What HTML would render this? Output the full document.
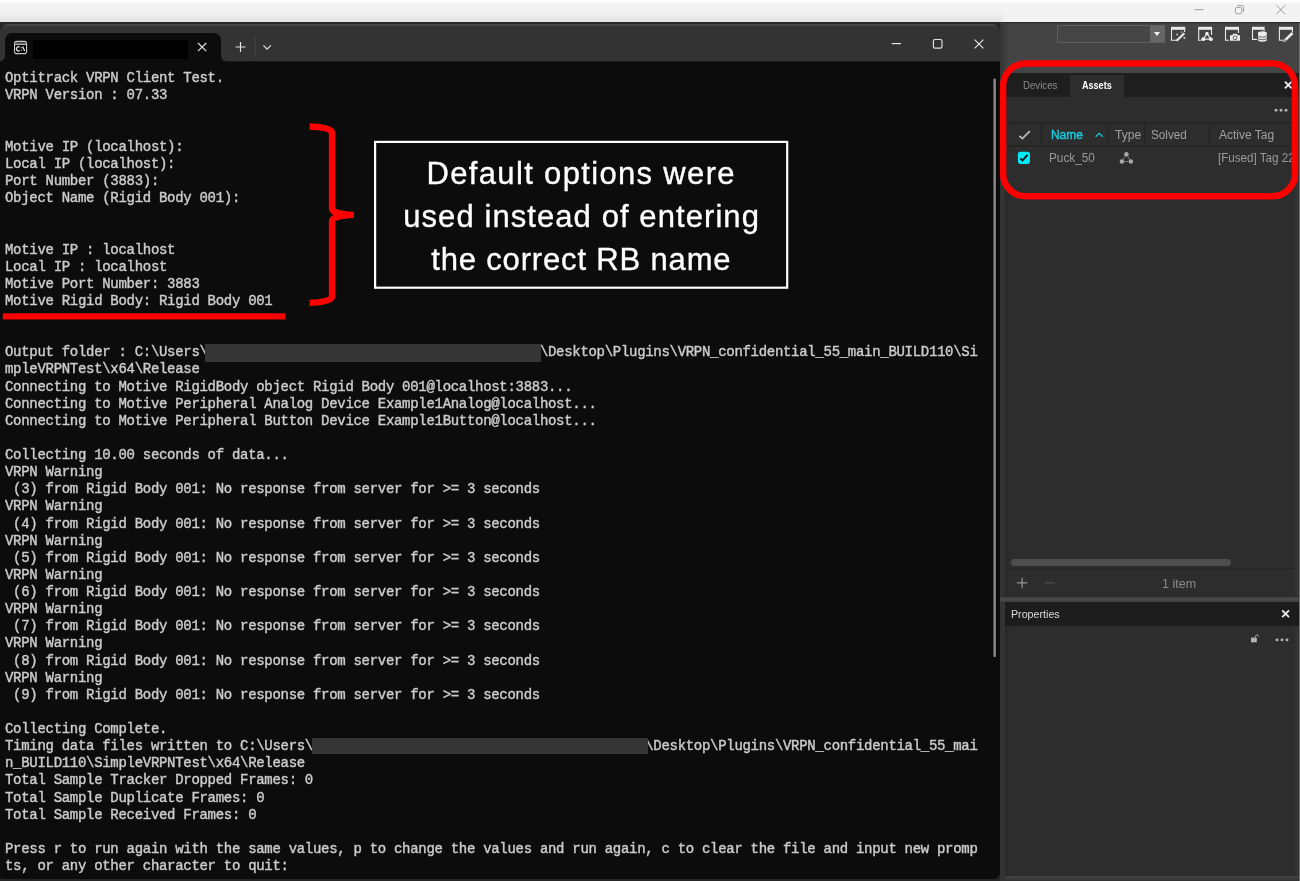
<!DOCTYPE html>
<html>
<head>
<meta charset="utf-8">
<title>VRPN</title>
<style>
html,body{margin:0;padding:0;}
body{width:1300px;height:881px;overflow:hidden;position:relative;background:#333333;font-family:"Liberation Sans",sans-serif;}
.abs{position:absolute;}
.g{will-change:transform;}
/* top light bar */
#topbar{left:0;top:0;width:1300px;height:21.8px;background:linear-gradient(#ffffff 0,#ffffff 1.6px,#f3f3f3 2.8px,#f3f3f3 21.8px);}
#topsh{left:0;top:11px;width:1004px;height:10.8px;background:linear-gradient(rgba(0,0,0,0) 0,rgba(0,0,0,0.025) 40%,rgba(0,0,0,0.07) 100%);border-radius:0 0 6px 0;}
/* terminal window */
#term{left:0;top:23.7px;width:1000px;height:855.5px;background:#0c0c0c;border-radius:8px 8px 6px 3px;overflow:hidden;}
#ttitle{left:0;top:0;width:1000px;height:37.7px;background:linear-gradient(#464646 0,#464646 1.4px,#333333 2.4px);}
#tab{left:5px;top:9.5px;width:216px;height:28.4px;background:#0c0c0c;border-radius:7px 7px 0 0;}
#redact0{left:33px;top:40px;width:155px;height:19px;background:#000;}
.tl{position:absolute;left:5px;white-space:pre;font-family:"Liberation Mono",monospace;font-size:14px;letter-spacing:-0.297px;color:#cccccc;line-height:17px;height:17px;-webkit-text-stroke:0.4px #cccccc;}
.rd{position:absolute;background:#353535;}

/* right panel */
#rp{left:1000px;top:22px;width:300px;height:859px;background:#333333;}
#rptool{left:1000px;top:23px;width:300px;height:50px;background:linear-gradient(#3b3b3b 0,#3b3b3b 1px,#444444 1px);}
#rpline{left:0;top:21.8px;width:1300px;height:2px;background:#2c2c2c;}
#dd{left:1057px;top:25px;width:106px;height:16px;border:1px solid #5e5e5e;background:#454545;}
#ddb{left:1149.5px;top:26px;width:15px;height:16px;background:#666666;}
#ddarrow{left:1153.5px;top:32px;width:0;height:0;border-left:3.5px solid transparent;border-right:3.5px solid transparent;border-top:4px solid #f4f4f4;}
#pA{left:1005.2px;top:73px;width:290.3px;height:523px;background:linear-gradient(to right,#272727,#2d2d2d 4px);}
#pAtabs{left:1005px;top:72.8px;width:293.5px;height:24.4px;background:#1e1e1e;}
#pAtab{left:1070px;top:74.8px;width:54.4px;height:22.5px;background:#2d2d2d;}
.t{position:absolute;white-space:pre;line-height:1;transform-origin:0 0;}
.hline{position:absolute;height:1.4px;background:#242424;}
.vline{position:absolute;width:1.3px;background:#242424;}
#hsb{left:1011px;top:559px;width:220px;height:7px;border-radius:3.5px;background:#4e4e4e;}
#pB{left:1005.2px;top:601.8px;width:290.3px;height:274px;background:linear-gradient(to right,#272727,#2d2d2d 4px);}
#pBtitle{left:1005px;top:601.8px;width:293.5px;height:24.2px;background:#1c1c1c;}
#botband{left:0;top:22px;width:1000px;height:859px;background:#262626;}
#botband2{left:1005px;top:875.5px;width:295px;height:5.5px;background:linear-gradient(#444,#333);}
.nt{position:absolute;white-space:pre;font-size:31px;line-height:36px;color:#ffffff;-webkit-text-stroke:0.35px #ffffff;}
</style>
</head>
<body>
<div id="topbar" class="abs"></div><div id="topsh" class="abs"></div>
<div id="rp" class="abs"></div>
<div id="rpline" class="abs"></div>
<div id="rptool" class="abs"></div>
<div class="abs" style="left:1000px;top:24px;width:9px;height:49px;background:linear-gradient(to right,rgba(0,0,0,0.25),rgba(0,0,0,0))"></div>
<div id="dd" class="abs"></div><div id="ddb" class="abs"></div><div id="ddarrow" class="abs"></div>
<div id="pA" class="abs"></div>
<div id="pAtabs" class="abs"></div>
<div id="pAtab" class="abs"></div>
<div id="hsb" class="abs"></div>
<div class="hline" style="left:1005px;top:568px;width:291px;background:#262626"></div>
<div id="pB" class="abs"></div>
<div id="pBtitle" class="abs"></div>
<div class="hline" style="left:1005px;top:650.5px;width:291px;background:#333"></div>
<div id="botband" class="abs"></div>
<div id="botband2" class="abs"></div>
<div class="abs" style="left:1000px;top:595.6px;width:300px;height:1.6px;background:#2a2a2a"></div>
<div class="abs" style="left:1000px;top:597.2px;width:300px;height:4.6px;background:linear-gradient(#404040,#4a4a4a 50%,#3c3c3c)"></div>
<div id="pBtitle2" class="abs" style="left:1005px;top:601.8px;width:293.6px;height:24.2px;background:#1c1c1c"></div>
<div class="abs" style="left:1298.6px;top:23px;width:1.4px;height:858px;background:#727272"></div>
<div id="ptext" class="g">
<div class="t" style="left:1023.32px;top:80.03px;font-size:10.8px;color:#8c8c8c;transform:scaleX(0.8946)">Devices</div>
<div class="t" style="left:1082.16px;top:80.03px;font-size:10.8px;color:#ffffff;font-weight:bold;transform:scaleX(0.8381)">Assets</div>
<div class="t" style="left:1050.78px;top:129.23px;font-size:12px;color:#14cde0;-webkit-text-stroke:0.4px #14cde0;transform:scaleX(0.9943)">Name</div>
<div class="t" style="left:1114.88px;top:129.23px;font-size:12px;color:#a0a0a0;transform:scaleX(1.0030)">Type</div>
<div class="t" style="left:1150.60px;top:129.23px;font-size:12px;color:#a0a0a0;transform:scaleX(0.9784)">Solved</div>
<div class="t" style="left:1219.03px;top:129.23px;font-size:12px;color:#a0a0a0;transform:scaleX(1.0006)">Active Tag</div>
<div class="t" style="left:1049.29px;top:150.95px;font-size:13px;color:#9a9a9a;transform:scaleX(0.9055)">Puck_50</div>
<div class="t" style="left:1217.50px;top:150.95px;font-size:13px;color:#9a9a9a;transform:scaleX(0.8942)">[Fused] Tag 22</div>
<div class="t" style="left:1161.75px;top:576.50px;font-size:13px;color:#8a8a8a;transform:scaleX(0.9632)">1 item</div>
<div class="t" style="left:1010.56px;top:609.16px;font-size:11px;color:#dddddd;transform:scaleX(0.9709)">Properties</div>
</div><!--endptext-->
<div id="term" class="abs">
  <div id="ttitle" class="abs"></div>
  <div id="tab" class="abs"></div>
</div>
<div id="redact0" class="abs"></div>
<div id="lines" class="g">
<div class="tl" style="top:70.36px">Optitrack VRPN Client Test.</div>
<div class="tl" style="top:87.48px">VRPN Version : 07.33</div>
<div class="tl" style="top:138.86px">Motive IP (localhost):</div>
<div class="tl" style="top:155.98px">Local IP (localhost):</div>
<div class="tl" style="top:173.11px">Port Number (3883):</div>
<div class="tl" style="top:190.23px">Object Name (Rigid Body 001):</div>
<div class="tl" style="top:241.61px">Motive IP : localhost</div>
<div class="tl" style="top:258.74px">Local IP : localhost</div>
<div class="tl" style="top:275.86px">Motive Port Number: 3883</div>
<div class="tl" style="top:292.99px">Motive Rigid Body: Rigid Body 001</div>
<div class="tl" style="top:344.36px">Output folder : C:\Users\                                         \Desktop\Plugins\VRPN_confidential_55_main_BUILD110\Si</div>
<div class="tl" style="top:361.49px">mpleVRPNTest\x64\Release</div>
<div class="tl" style="top:378.61px">Connecting to Motive RigidBody object Rigid Body 001@localhost:3883...</div>
<div class="tl" style="top:395.74px">Connecting to Motive Peripheral Analog Device Example1Analog@localhost...</div>
<div class="tl" style="top:412.86px">Connecting to Motive Peripheral Button Device Example1Button@localhost...</div>
<div class="tl" style="top:447.11px">Collecting 10.00 seconds of data...</div>
<div class="tl" style="top:464.24px">VRPN Warning</div>
<div class="tl" style="top:481.36px"> (3) from Rigid Body 001: No response from server for &gt;= 3 seconds</div>
<div class="tl" style="top:498.49px">VRPN Warning</div>
<div class="tl" style="top:515.61px"> (4) from Rigid Body 001: No response from server for &gt;= 3 seconds</div>
<div class="tl" style="top:532.74px">VRPN Warning</div>
<div class="tl" style="top:549.86px"> (5) from Rigid Body 001: No response from server for &gt;= 3 seconds</div>
<div class="tl" style="top:566.99px">VRPN Warning</div>
<div class="tl" style="top:584.11px"> (6) from Rigid Body 001: No response from server for &gt;= 3 seconds</div>
<div class="tl" style="top:601.24px">VRPN Warning</div>
<div class="tl" style="top:618.36px"> (7) from Rigid Body 001: No response from server for &gt;= 3 seconds</div>
<div class="tl" style="top:635.49px">VRPN Warning</div>
<div class="tl" style="top:652.61px"> (8) from Rigid Body 001: No response from server for &gt;= 3 seconds</div>
<div class="tl" style="top:669.74px">VRPN Warning</div>
<div class="tl" style="top:686.86px"> (9) from Rigid Body 001: No response from server for &gt;= 3 seconds</div>
<div class="tl" style="top:721.11px">Collecting Complete.</div>
<div class="tl" style="top:738.24px">Timing data files written to C:\Users\                                         \Desktop\Plugins\VRPN_confidential_55_mai</div>
<div class="tl" style="top:755.36px">n_BUILD110\SimpleVRPNTest\x64\Release</div>
<div class="tl" style="top:772.49px">Total Sample Tracker Dropped Frames: 0</div>
<div class="tl" style="top:789.61px">Total Sample Duplicate Frames: 0</div>
<div class="tl" style="top:806.74px">Total Sample Received Frames: 0</div>
<div class="tl" style="top:840.99px">Press r to run again with the same values, p to change the values and run again, c to clear the file and input new promp</div>
<div class="tl" style="top:858.11px">ts, or any other character to quit:</div>
</div><!--endlines-->
<div class="rd" style="left:205px;top:343.6px;width:335.8px;height:18px"></div>
<div class="rd" style="left:311.5px;top:738.2px;width:336.5px;height:16px"></div>
<svg id="icons" class="abs" style="left:0;top:0" width="1300" height="881" viewBox="0 0 1300 881">
<rect x="993.45" y="78.6" width="2.4" height="578.5" rx="1.2" fill="#8c8c8c"/>
<rect x="227" y="61" width="773" height="1" fill="#1b1b1b"/><rect x="0" y="61" width="1" height="1" fill="#1b1b1b"/>
<!-- top light bar window controls -->
<g stroke="#9b9b9b" stroke-width="1" fill="none">
<path d="M1194.5,9.7 H1203.5"/>
<rect x="1235.4" y="7.4" width="6.4" height="6.4" rx="1.5"/>
<path d="M1237.4,5.4 H1241.6 Q1243.6,5.4 1243.6,7.4 V11.6"/>
<path d="M1276.3,5.2 L1285.3,14.2 M1285.3,5.2 L1276.3,14.2"/>
</g>
<path d="M221,61.5 V55 Q221,61.5 227.5,61.5 Z M5,61.5 V55 Q5,61.5 -1.5,61.5 Z" fill="#0c0c0c"/>
<!-- terminal tab icon -->
<rect x="14.6" y="41.3" width="11.9" height="12.4" rx="2.2" fill="none" stroke="#c4c4c4" stroke-width="1.25"/>
<rect x="15.8" y="42.3" width="9.5" height="1.6" fill="#676767"/>
<path d="M14.6,44.6 H26.5" stroke="#c4c4c4" stroke-width="1"/>
<rect x="15.3" y="45.2" width="10.5" height="7.2" fill="#000"/>
<path d="M19.7,47.2 A2,2.1 0 1 0 19.7,50.4" fill="none" stroke="#e6e6e6" stroke-width="1.35"/>
<rect x="20.7" y="47.2" width="1.1" height="1.1" fill="#e0e0e0"/><rect x="20.7" y="49.6" width="1.1" height="1.1" fill="#e0e0e0"/>
<path d="M22.6,46.5 L24.7,51" stroke="#e6e6e6" stroke-width="1.3"/>
<!-- tab close, plus, divider, chevron -->
<g stroke="#e4e4e4" stroke-width="1.15" fill="none">
<path d="M198,43 L206.2,51.2 M206.2,43 L198,51.2"/>
<path d="M235.6,47 H245.4 M240.5,42.1 V51.9"/>
<path d="M263.4,45.3 L267.1,49.2 L270.8,45.3"/>
</g>
<path d="M255.1,37 V57.5" stroke="#474747" stroke-width="1"/>
<!-- terminal window controls -->
<g stroke="#e4e4e4" stroke-width="1.15" fill="none">
<path d="M891.7,43.6 H901"/>
<rect x="933.4" y="39.5" width="8.6" height="8.6" rx="1.6"/>
<path d="M974.6,39.6 L983.4,48.4 M983.4,39.6 L974.6,48.4"/>
</g>
<!-- right toolbar icons -->
<g id="tbi">
<g fill="none" stroke="#e9e9e9" stroke-width="1.1">
<path d="M1171.5,29 V40.3 H1177"/><path d="M1184.6,29 V32"/>
<path d="M1198.7,29 V40.3 H1201"/><path d="M1211.5,29 V35"/>
<path d="M1225.5,29 V40.3 H1229"/><path d="M1238.4,29 V33"/>
<path d="M1252.5,29 V39.4 H1257"/><path d="M1264,29 V31"/>
<path d="M1279.4,29 V40.3 H1284"/><path d="M1292.4,29 V32"/>
</g>
<g fill="#e9e9e9">
<rect x="1171" y="26.8" width="14.2" height="3"/>
<rect x="1198.2" y="26.8" width="13.9" height="3"/>
<rect x="1225" y="26.8" width="14" height="3"/>
<rect x="1252" y="26.8" width="12.6" height="3"/>
<rect x="1278.9" y="26.8" width="14.1" height="3"/>
</g>
<!-- wand -->
<path d="M1176.6,40.8 L1184.3,33.2" stroke="#e9e9e9" stroke-width="2.2"/>
<rect x="1176.3" y="33.7" width="1.6" height="1.6" fill="#d8d8d8"/><rect x="1183.6" y="37" width="1.7" height="1.7" fill="#d8d8d8"/><rect x="1181" y="31.5" width="1.2" height="1.2" fill="#cfcfcf"/>
<!-- nodes -->
<path d="M1207,33.6 L1203.2,39.2 H1210.9 Z" fill="none" stroke="#e9e9e9" stroke-width="1.2"/>
<circle cx="1207" cy="33.5" r="1.7" fill="#f2f2f2"/><circle cx="1203.2" cy="39.2" r="1.9" fill="#f2f2f2"/><circle cx="1210.9" cy="39.2" r="1.9" fill="#f2f2f2"/>
<!-- camera -->
<path d="M1230,35.2 H1232.3 L1233.2,33.8 H1236.8 L1237.7,35.2 H1240 V40.8 H1230 Z" fill="#ececec"/>
<circle cx="1235" cy="37.8" r="1.9" fill="none" stroke="#555" stroke-width="0.9"/>
<!-- database -->
<path d="M1258,33 V40 A4.4,1.7 0 0 0 1266.8,40 V33 Z" fill="#ececec"/>
<ellipse cx="1262.4" cy="33" rx="4.4" ry="1.7" fill="#ececec"/>
<path d="M1258,35.5 A4.4,1.7 0 0 0 1266.8,35.5 M1258,38 A4.4,1.7 0 0 0 1266.8,38" fill="none" stroke="#444" stroke-width="0.8"/>
<!-- pencil -->
<path d="M1284.6,40.6 L1292.6,33" stroke="#ececec" stroke-width="2.6"/>
<path d="M1283.3,41.9 L1285.6,39.6" stroke="#9a9a9a" stroke-width="2.2"/>
</g>
<!-- panel A: close, dots -->
<path d="M1284.9,81.6 L1291.7,88.4 M1291.7,81.6 L1284.9,88.4" stroke="#ececec" stroke-width="1.8" fill="none"/>
<g fill="#b4b4b4"><circle cx="1276" cy="110.3" r="1.45"/><circle cx="1281" cy="110.3" r="1.45"/><circle cx="1286" cy="110.3" r="1.45"/></g>
<g fill="#242424">
<rect x="1007.6" y="122.4" width="288" height="1.5"/><rect x="1007.6" y="145.1" width="288" height="1.6"/>
<rect x="1040.4" y="125" width="1.3" height="18.4"/><rect x="1107.9" y="125" width="1.3" height="18.4"/><rect x="1144.1" y="125" width="1.3" height="18.4"/><rect x="1208.9" y="125" width="1.3" height="18.4"/>
</g>
<!-- header checkmark, caret -->
<path d="M1019.3,135.9 L1022.4,138.6 L1029.8,131.2" stroke="#b8b8b8" stroke-width="1.8" fill="none"/>
<path d="M1095.6,136.8 L1099.2,133.4 L1102.8,136.8" stroke="#14cde0" stroke-width="1.3" fill="none"/>
<!-- checkbox -->
<rect x="1017.9" y="151.8" width="12.1" height="12.2" rx="2.4" fill="#05e9fb"/>
<path d="M1020.3,158.4 L1022.5,160.5 L1027.5,154.9" stroke="#161616" stroke-width="1.9" fill="none"/>
<!-- type icon -->
<path d="M1126.4,154.2 L1121.9,161.5 H1130.9 Z" fill="none" stroke="#777777" stroke-width="1"/>
<circle cx="1126.4" cy="154.2" r="2.25" fill="#a8a8a8"/><circle cx="1121.9" cy="161.5" r="2.25" fill="#a8a8a8"/><circle cx="1130.9" cy="161.5" r="2.25" fill="#a8a8a8"/>
<!-- footer plus/minus -->
<path d="M1016.9,582.9 H1027.3 M1022.1,577.7 V588.1" stroke="#adadad" stroke-width="1" fill="none"/>
<path d="M1045,582.9 H1055" stroke="#565656" stroke-width="1" fill="none"/>
<!-- properties: close, lock, dots -->
<path d="M1282.2,610.4 L1289,617.2 M1289,610.4 L1282.2,617.2" stroke="#ececec" stroke-width="1.8" fill="none"/>
<rect x="1251" y="637.6" width="5.8" height="4.7" fill="#b4b4b4"/>
<path d="M1255.4,637.6 V636.2 A1.7,2.2 0 0 1 1258.6,636.6" stroke="#b4b4b4" stroke-width="0.9" fill="none"/>
<g fill="#b4b4b4"><circle cx="1277" cy="639.9" r="1.45"/><circle cx="1282" cy="639.9" r="1.45"/><circle cx="1287" cy="639.9" r="1.45"/></g>
</svg>
<svg id="anno" class="abs" style="left:0;top:0" width="1300" height="881" viewBox="0 0 1300 881">
<rect x="1003.1" y="63.4" width="291.9" height="132.8" rx="22.5" ry="22.5" fill="none" stroke="#ff0000" stroke-width="6.5"/>
<rect x="2.8" y="313.3" width="282.6" height="6.2" fill="#ff0000"/>
<path d="M309.6,126.5 A22.4,6 0 0 1 332,132.5 L332,208.9 A22,6 0 0 0 354,214.9 A22,6 0 0 0 332,220.9 L332,296.8 A22.4,6 0 0 1 309.6,302.8" fill="none" stroke="#ff0000" stroke-width="6.3"/>
<rect x="375.1" y="141.9" width="412.1" height="145.8" fill="#0c0c0c" stroke="#ffffff" stroke-width="2.2"/>
</svg>
<div id="note" class="g">
<div class="nt" style="left:426.5px;top:156.1px;letter-spacing:1.34px">Default options were</div>
<div class="nt" style="left:403.2px;top:199.3px;letter-spacing:1.08px">used instead of entering</div>
<div class="nt" style="left:431.2px;top:241.9px;letter-spacing:0.84px">the correct RB name</div>
</div>
</body>
</html>
